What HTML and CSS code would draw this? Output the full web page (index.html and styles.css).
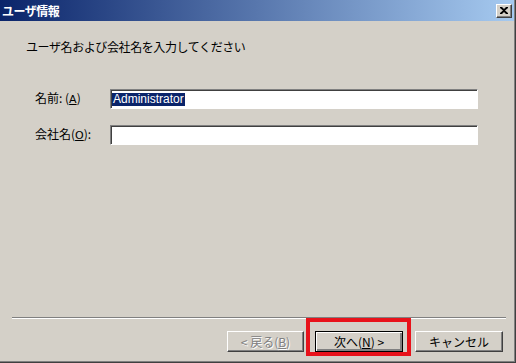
FILE: index.html
```html
<!DOCTYPE html>
<html>
<head>
  <title>ユーザ情報</title>
  <link rel="stylesheet" href="styles.css">
</head>
<body>
  <div class="window">
    <div class="titlebar">
      <span class="title">ユーザ情報</span>
      <span class="close">
        <svg width="8" height="7" viewBox="0 0 8 7">
          <path d="M0 0h2l2 2 2-2h2v1L5 3.5 8 6v1H6L4 5 2 7H0V6l3-2.5L0 1z" fill="#000"/>
        </svg>
      </span>
    </div>

    <div class="content">
      <p class="intro">ユーザ名および会社名を入力してください</p>
      <div class="form">
        <div class="row">
          <label class="label">名前: (<u>A</u>)</label>
          <div class="field"><span class="selected">Administrator</span></div>
        </div>
        <div class="row">
          <label class="label">会社名(<u>O</u>):</label>
          <div class="field"></div>
        </div>
      </div>
    </div>

    <div class="footer">
      <div class="separator"></div>
      <div class="buttons">
        <button class="btn btn-back" disabled>&lt; 戻る(<u>B</u>)</button>
        <button class="btn btn-next">次へ(<u>N</u>) &gt;</button>
        <button class="btn btn-cancel">キャンセル</button>
      </div>
    </div>

    <!-- red annotation box around the default button -->
    <div class="highlight"></div>
  </div>
</body>
</html>
```

FILE: styles.css
```css
body {
  margin: 0;
  background-color: #d4d0c8;
  font-family: "Noto Sans CJK JP", "DejaVu Sans", sans-serif;
  font-size: 12px;
  color: #000;
}

.window {
  position: relative;
  width: 516px;
  height: 363px;
  box-sizing: border-box;
  display: flex;
  flex-direction: column;
  background-color: #d4d0c8;
  border-right: 1px solid #404040;
  border-bottom: 1px solid #404040;
  box-shadow: inset -1px -1px 0 #808080;
}

.titlebar {
  height: 21px;
  margin-right: 1px;
  display: flex;
  align-items: center;
  justify-content: space-between;
  background: linear-gradient(to right, #0a246a, #a6caf0);
}

.title {
  color: #fff;
  font-weight: bold;
  font-size: 12px;
  line-height: 16px;
  padding-left: 2px;
  letter-spacing: -0.5px;
}

.close {
  width: 16px;
  height: 14px;
  margin-right: 2px;
  box-sizing: border-box;
  display: flex;
  align-items: center;
  justify-content: center;
  background-color: #d4d0c8;
  border-top: 1px solid #fff;
  border-left: 1px solid #fff;
  border-right: 1px solid #404040;
  border-bottom: 1px solid #404040;
  box-shadow: inset -1px -1px 0 #808080;
}

.content {
  flex: 1;
}

.intro {
  margin: 18px 0 0 26px;
  line-height: 16px;
  letter-spacing: -0.4px;
}

.form {
  margin-top: 34px;
  display: flex;
  flex-direction: column;
  gap: 16px;
}

.row {
  display: flex;
  align-items: center;
}

.label {
  width: 75px;
  padding-left: 35px;
  line-height: 16px;
}

.label u {
  font-family: "DejaVu Sans", sans-serif;
  font-size: 11px;
}

.field {
  width: 368px;
  height: 20px;
  box-sizing: border-box;
  display: flex;
  align-items: center;
  padding-left: 1px;
  background-color: #fff;
  border-top: 1px solid #808080;
  border-left: 1px solid #808080;
  border-right: 1px solid #fff;
  border-bottom: 1px solid #fff;
  box-shadow: inset 1px 1px 0 #404040, 1px 1px 0 #d4d0c8;
}

.selected {
  font-family: "Liberation Sans", Arial, sans-serif;
  font-size: 12px;
  line-height: 13px;
  padding: 0 1px;
  background-color: #0a246a;
  color: #fff;
}

.footer {
  padding-bottom: 10px;
}

.separator {
  margin: 0 9px 12px 12px;
  height: 1px;
  background-color: #808080;
  border-bottom: 1px solid #fff;
}

.buttons {
  display: flex;
  justify-content: flex-end;
  padding-right: 12px;
}

.btn {
  height: 21px;
  padding: 0;
  box-sizing: border-box;
  font-family: "Noto Sans CJK JP", "DejaVu Sans", sans-serif;
  font-size: 12px;
  color: #000;
  background-color: #d4d0c8;
  border-top: 1px solid #fff;
  border-left: 1px solid #fff;
  border-right: 1px solid #404040;
  border-bottom: 1px solid #404040;
  box-shadow: inset -1px -1px 0 #808080;
}

.btn-back {
  width: 77px;
  margin-right: 11px;
  color: #808080;
  text-shadow: 1px 1px 0 #fff;
}

.btn-next {
  width: 88px;
  margin-right: 12px;
  border: 1px solid #000;
  box-shadow: inset 1px 1px 0 #fff, inset -2px -2px 0 #808080;
}

.btn-cancel {
  width: 88px;
}

.highlight {
  position: absolute;
  left: 306px;
  top: 318px;
  width: 105px;
  height: 38px;
  box-sizing: border-box;
  border: 4px solid #e8121a;
}
```
